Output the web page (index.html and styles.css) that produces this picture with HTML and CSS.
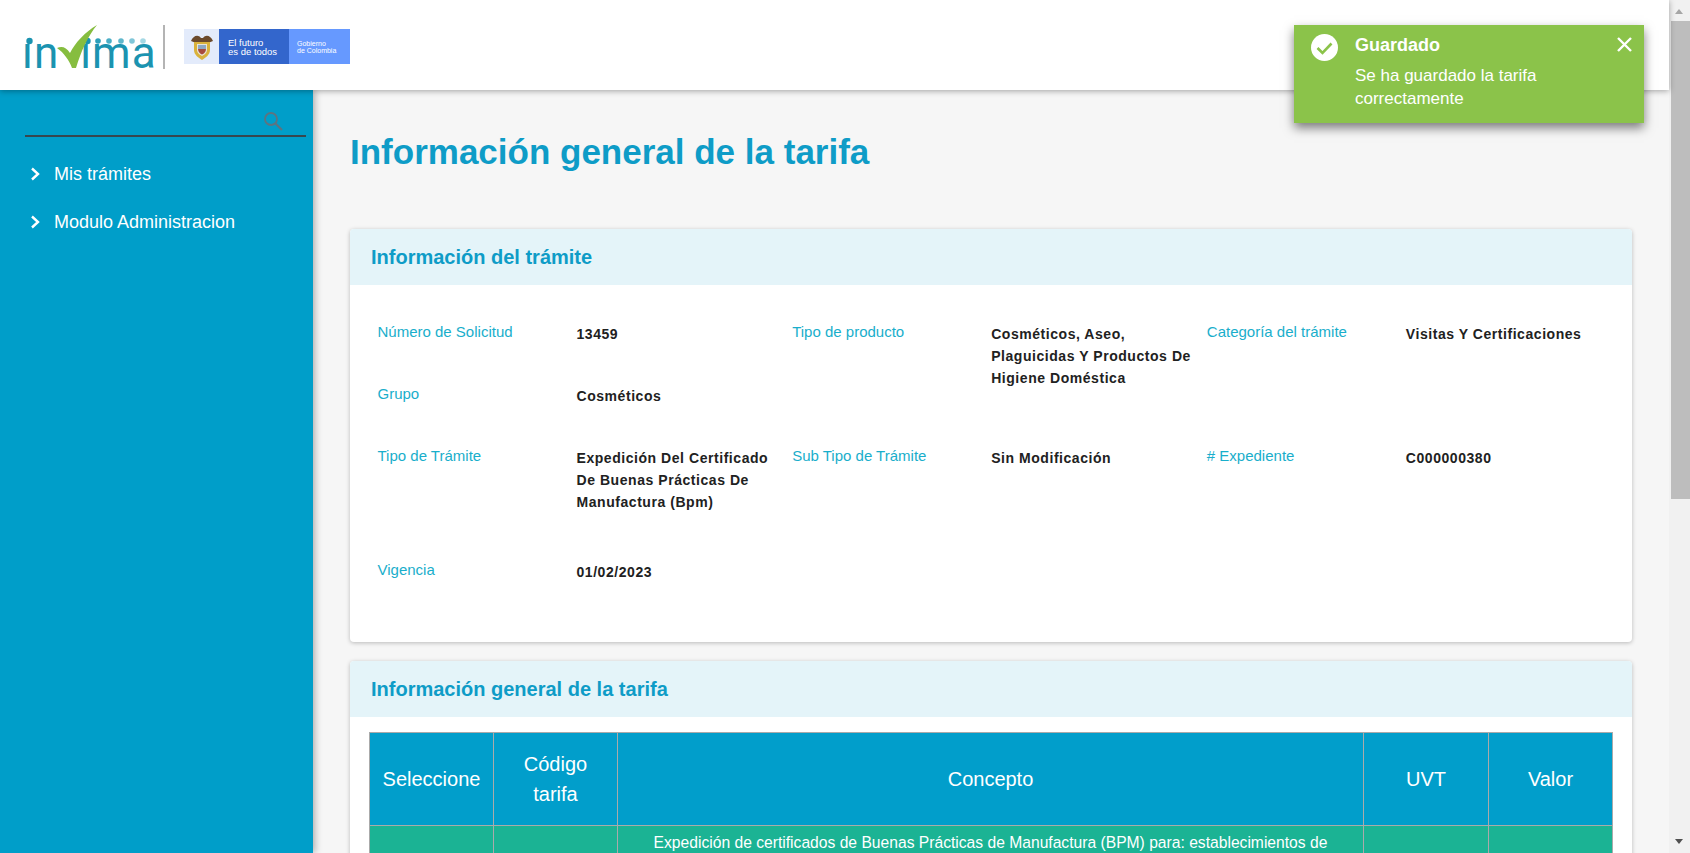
FILE: index.html
```html
<!DOCTYPE html>
<html lang="es">
<head>
  <meta charset="utf-8">
  <title>Información general de la tarifa</title>
  <link rel="stylesheet" href="styles.css">
</head>
<body>
  <div class="page">
    <div class="app">
      <header class="topbar">
        <div class="logo" aria-label="invima">
          <span class="logo-word">ın</span>
          <svg class="logo-check" viewBox="0 0 40 44" width="40" height="44">
            <path d="M0 23 C5 21 9 22 13 28 C18 18 28 7 40 0 C31 11 24 26 19 43 L15 43 C12 35 7 28 0 23 Z" fill="#86bd3f"/>
          </svg>
          <span class="logo-word logo-word-end">ıma</span>
          <svg class="logo-dots" viewBox="0 0 141 10" width="141" height="10">
            <circle cx="7.5" cy="5" r="3.2" fill="#1b93b0"/>
            <circle cx="65.5" cy="5" r="3.2" fill="#1b93b0"/>
            <circle cx="76" cy="5" r="2.8" fill="#2d9fba"/>
            <circle cx="87" cy="5" r="2.8" fill="#4aaec6"/>
            <circle cx="99" cy="5" r="2.8" fill="#5fb7cc"/>
            <circle cx="110" cy="5" r="2.8" fill="#80c6d8"/>
            <circle cx="121" cy="5" r="2.8" fill="#a5d8e4"/>
          </svg>
        </div>
        <div class="logo-sep"></div>
        <div class="gov">
          <div class="gov-shield">
            <svg viewBox="0 0 24 26" width="24" height="26">
              <path d="M1 7 C3 2 8 0 11 4 L13 4 C16 0 21 2 23 7 L18 9 L6 9 Z" fill="#6b4a2c"/>
              <path d="M4 8 H20 V16 C20 21 15 24 12 26 C9 24 4 21 4 16 Z" fill="#d9b23c"/>
              <path d="M7 10 H17 V16 C17 19 14 21 12 22 C10 21 7 19 7 16 Z" fill="#e8e4d8"/>
              <rect x="8" y="11" width="8" height="4" fill="#8fa9c4"/>
              <path d="M8 15 H16 C16 18 14 19.5 12 20.5 C10 19.5 8 18 8 15 Z" fill="#a84b3c"/>
            </svg>
          </div>
          <div class="gov-motto">El futuro<br>es de todos</div>
          <div class="gov-name">Gobierno<br>de Colombia</div>
        </div>
      </header>

      <div class="layout">
        <aside class="sidebar">
          <div class="search">
            <svg viewBox="0 0 20 20" width="20" height="20">
              <circle cx="8" cy="8" r="6" fill="none" stroke="#5d7480" stroke-width="1.8"/>
              <path d="M12.5 12.5 L19 19" stroke="#5d7480" stroke-width="2.2"/>
            </svg>
          </div>
          <ul class="menu">
            <li class="menu-item">
              <svg viewBox="0 0 10 14" width="10" height="14"><path d="M2 1.5 L8 7 L2 12.5" fill="none" stroke="#fff" stroke-width="2.4"/></svg>
              Mis trámites
            </li>
            <li class="menu-item">
              <svg viewBox="0 0 10 14" width="10" height="14"><path d="M2 1.5 L8 7 L2 12.5" fill="none" stroke="#fff" stroke-width="2.4"/></svg>
              Modulo Administracion
            </li>
          </ul>
        </aside>

        <main class="content">
          <h1 class="page-title">Información general de la tarifa</h1>

          <section class="card">
            <h2 class="card-title">Información del trámite</h2>
            <div class="info-grid">
              <div class="pair"><span class="label">Número de Solicitud</span><span class="value">13459</span></div>
              <div class="pair tall"><span class="label">Tipo de producto</span><span class="value">Cosméticos, Aseo, Plaguicidas Y Productos De Higiene Doméstica</span></div>
              <div class="pair"><span class="label">Categoría del trámite</span><span class="value">Visitas Y Certificaciones</span></div>
              <div class="pair"><span class="label">Grupo</span><span class="value">Cosméticos</span></div>
              <div></div>
              <div class="pair"><span class="label">Tipo de Trámite</span><span class="value">Expedición Del Certificado De Buenas Prácticas De Manufactura (Bpm)</span></div>
              <div class="pair"><span class="label">Sub Tipo de Trámite</span><span class="value">Sin Modificación</span></div>
              <div class="pair"><span class="label"># Expediente</span><span class="value">C000000380</span></div>
              <div class="pair"><span class="label">Vigencia</span><span class="value">01/02/2023</span></div>
            </div>
          </section>

          <section class="card">
            <h2 class="card-title">Información general de la tarifa</h2>
            <div class="table-wrap">
              <table class="tarifa">
                <thead>
                  <tr>
                    <th class="col-sel">Seleccione</th>
                    <th class="col-cod">Código tarifa</th>
                    <th>Concepto</th>
                    <th class="col-uvt">UVT</th>
                    <th class="col-val">Valor</th>
                  </tr>
                </thead>
                <tbody>
                  <tr>
                    <td></td>
                    <td></td>
                    <td>Expedición de certificados de Buenas Prácticas de Manufactura (BPM) para: establecimientos de</td>
                    <td></td>
                    <td></td>
                  </tr>
                </tbody>
              </table>
            </div>
          </section>
        </main>
      </div>
    </div>

    <div class="scrollbar">
      <div class="arrow-up"></div>
      <div class="thumb"></div>
      <div class="arrow-down"></div>
    </div>
  </div>

  <div class="toast">
    <svg class="toast-icon" viewBox="0 0 27 27" width="27" height="27">
      <circle cx="13.5" cy="13.5" r="13.5" fill="#fff"/>
      <path d="M6.5 14 L11.5 19 L20.5 9.5" fill="none" stroke="#8bc34a" stroke-width="2.6"/>
    </svg>
    <div class="toast-text">
      <div class="toast-title">Guardado</div>
      <div class="toast-msg">Se ha guardado la tarifa correctamente</div>
    </div>
    <svg class="toast-close" viewBox="0 0 15 15" width="15" height="15">
      <path d="M1 1 L14 14 M14 1 L1 14" stroke="#fff" stroke-width="2.4"/>
    </svg>
  </div>
</body>
</html>
```

FILE: styles.css
```css
html, body {
  margin: 0;
  height: 100%;
  overflow: hidden;
}

body {
  font-family: "Liberation Sans", Arial, sans-serif;
  color: #212121;
  background: #f6f6f6;
}

.page {
  display: flex;
  height: 853px;
}

.app {
  flex: 1;
  min-width: 0;
  display: flex;
  flex-direction: column;
}

/* top bar */
.topbar {
  position: relative;
  z-index: 3;
  height: 90px;
  box-sizing: border-box;
  padding-top: 3px;
  flex: none;
  display: flex;
  align-items: center;
  background: #fff;
  box-shadow: 0 1px 6px rgba(0, 0, 0, 0.35);
}

.logo {
  position: relative;
  display: flex;
  align-items: flex-start;
  box-sizing: border-box;
  height: 44px;
  width: 141px;
  margin-left: 22px;
  padding-top: 6px;
}

.logo-word {
  font-family: "Roboto", sans-serif;
  font-size: 44px;
  line-height: 44px;
  letter-spacing: 1px;
  color: #1b93b0;
}

.logo-word-end {
  margin-left: -17px;
}

.logo-check {
  position: relative;
  z-index: 1;
  flex: none;
  margin: -6px 0 0 -2px;
}

.logo-dots {
  position: absolute;
  top: 11px;
  left: 0;
}

.logo-sep {
  width: 2px;
  height: 44px;
  background: #b4b4b4;
}

.gov {
  display: flex;
  height: 35px;
  margin-left: 19px;
  color: #fff;
}

.gov-shield {
  width: 35px;
  display: flex;
  align-items: center;
  justify-content: center;
  background: #e3ebfb;
}

.gov-motto {
  width: 70px;
  box-sizing: border-box;
  padding: 9px 0 0 9px;
  font-size: 9.5px;
  line-height: 9px;
  background: #3366cc;
}

.gov-name {
  width: 61px;
  box-sizing: border-box;
  padding: 11px 0 0 8px;
  font-size: 7px;
  line-height: 7px;
  background: #6699ff;
}

.layout {
  flex: 1;
  min-height: 0;
  display: flex;
}

/* side menu */
.sidebar {
  position: relative;
  z-index: 2;
  width: 313px;
  flex: none;
  background: #009ec9;
  box-shadow: 2px 0 7px rgba(0, 0, 0, 0.3);
}

.search {
  height: 24px;
  margin: 21px 7px 0 25px;
  padding-right: 23px;
  display: flex;
  justify-content: flex-end;
  border-bottom: 2px solid #37474f;
}

.menu {
  list-style: none;
  margin: 25px 0 0;
  padding: 0;
}

.menu-item {
  display: flex;
  align-items: center;
  gap: 14px;
  height: 24px;
  margin-bottom: 24px;
  padding-left: 30px;
  font-size: 18px;
  color: #fff;
}

/* content */
.content {
  flex: 1;
  min-width: 0;
  padding: 0 37px;
  overflow: hidden;
}

.page-title {
  margin: 38px 0 53px;
  font-size: 35px;
  line-height: 48px;
  font-weight: bold;
  color: #0e9cc7;
}

.card {
  margin-bottom: 19px;
  background: #fff;
  border-radius: 4px;
  box-shadow: 0 1px 4px rgba(0, 0, 0, 0.25);
}

.card-title {
  margin: 0;
  height: 56px;
  padding: 0 21px;
  font-size: 20px;
  line-height: 56px;
  font-weight: bold;
  color: #0e9cc7;
  background: #e4f4f9;
  border-radius: 4px 4px 0 0;
}

.info-grid {
  display: grid;
  grid-template-columns: repeat(3, 1fr);
  grid-template-rows: 62px 62px 114px auto;
  padding: 38px 19px 59px;
}

.pair {
  display: grid;
  grid-template-columns: 199px 1fr;
  align-items: start;
  padding: 0 2px 0 8.5px;
}

.pair.tall {
  grid-row: span 2;
}

.label {
  font-size: 15px;
  line-height: 18px;
  color: #19aecb;
}

.value {
  font-size: 14px;
  line-height: 22px;
  font-weight: bold;
  letter-spacing: 0.55px;
  color: #212121;
}

.table-wrap {
  padding: 15px 19px 30px;
}

.tarifa {
  width: 100%;
  table-layout: fixed;
  border-collapse: collapse;
  color: #fff;
}

.tarifa th, .tarifa td {
  box-sizing: border-box;
  border: 1px solid #aaa;
  text-align: center;
}

.tarifa th {
  height: 93px;
  padding: 0 12px;
  font-size: 20px;
  line-height: 30px;
  font-weight: normal;
  background: #019ecb;
}

.tarifa td {
  padding: 6px 12px;
  font-size: 15.65px;
  line-height: 22px;
  background: #1bb394;
}

.col-sel, .col-cod {
  width: 124px;
}

.col-uvt {
  width: 125px;
}

.col-val {
  width: 124px;
}

/* fake window scrollbar */
.scrollbar {
  width: 21px;
  flex: none;
  position: relative;
  background: #f1f1f1;
}

.thumb {
  position: absolute;
  top: 21px;
  left: 2px;
  right: 0;
  height: 478px;
  background: #bdbdbd;
}

.arrow-up, .arrow-down {
  position: absolute;
  left: 6px;
  width: 0;
  height: 0;
  border-left: 4.5px solid transparent;
  border-right: 4.5px solid transparent;
}

.arrow-up {
  top: 9px;
  border-bottom: 5px solid #a6a6a6;
}

.arrow-down {
  bottom: 9px;
  border-top: 5px solid #505050;
}

/* notification */
.toast {
  position: absolute;
  z-index: 5;
  top: 25px;
  left: 1294px;
  width: 350px;
  height: 98px;
  box-sizing: border-box;
  padding: 9px 12px 0 17px;
  display: flex;
  align-items: flex-start;
  color: #fff;
  background: #8bc34a;
  box-shadow: 0 5px 10px rgba(0, 0, 0, 0.5);
}

.toast-icon {
  flex: none;
}

.toast-text {
  flex: 1;
  margin-left: 17px;
}

.toast-title {
  font-size: 18px;
  line-height: 23px;
  font-weight: bold;
  margin: 0 0 7px;
}

.toast-msg {
  width: 230px;
  font-size: 17px;
  line-height: 23px;
}

.toast-close {
  flex: none;
  margin-top: 3px;
}
```
